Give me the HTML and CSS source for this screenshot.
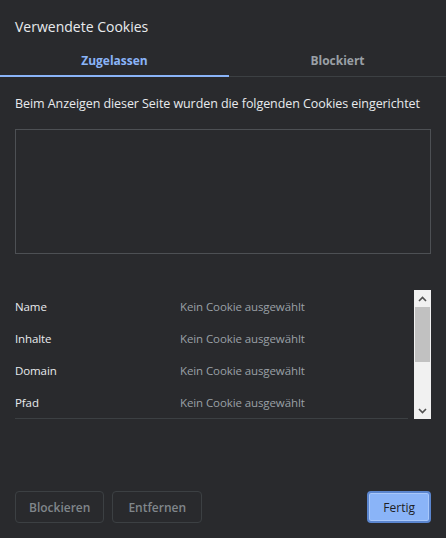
FILE: index.html
```html
<!DOCTYPE html>
<html lang="de">
<head>
<meta charset="utf-8">
<title>Verwendete Cookies</title>
<link rel="stylesheet" href="styles.css">
</head>
<body>
<div class="dialog">
  <div class="title">Verwendete Cookies</div>
  <div class="tabs">
    <div class="tab active">Zugelassen</div>
    <div class="tab">Blockiert</div>
  </div>
  <div class="desc">Beim Anzeigen dieser Seite wurden die folgenden Cookies eingerichtet</div>
  <div class="tree"></div>
  <div class="details">
    <div class="rows">
      <div class="row"><span class="label">Name</span><span class="value">Kein Cookie ausgewählt</span></div>
      <div class="row"><span class="label">Inhalte</span><span class="value">Kein Cookie ausgewählt</span></div>
      <div class="row"><span class="label">Domain</span><span class="value">Kein Cookie ausgewählt</span></div>
      <div class="row"><span class="label">Pfad</span><span class="value">Kein Cookie ausgewählt</span></div>
    </div>
    <div class="scrollbar">
      <div class="arrow">
        <svg width="9" height="6" viewBox="0 0 9 6"><path d="M1 5 L4.5 1.5 L8 5" fill="none" stroke="#505050" stroke-width="1.6"/></svg>
      </div>
      <div class="track"><div class="thumb"></div></div>
      <div class="arrow">
        <svg width="9" height="6" viewBox="0 0 9 6"><path d="M1 1 L4.5 4.5 L8 1" fill="none" stroke="#505050" stroke-width="1.6"/></svg>
      </div>
    </div>
  </div>
  <div class="footer">
    <button class="btn">Blockieren</button>
    <button class="btn wide">Entfernen</button>
    <button class="btn primary">Fertig</button>
  </div>
</div>
</body>
</html>
```
FILE: styles.css
```css
html, body {
  margin: 0;
  padding: 0;
  background: #292a2d;
}
body {
  font-family: "Open Sans", "Noto Sans", "Liberation Sans", sans-serif;
  color: #e8eaed;
}
.dialog {
  width: 446px;
  height: 538px;
  display: flex;
  flex-direction: column;
  box-sizing: border-box;
}
.title {
  font-size: 14px;
  line-height: 20px;
  padding: 17px 15px 0;
  height: 27px;
}
.tabs {
  display: grid;
  grid-template-columns: 229px 1fr;
  border-bottom: 1px solid #3c4043;
}
.tab {
  height: 33px;
  padding-top: 1px;
  box-sizing: border-box;
  display: flex;
  align-items: center;
  justify-content: center;
  font-size: 12px;
  font-weight: 700;
  color: #9aa0a6;
  border-bottom: 2px solid transparent;
  margin-bottom: -1px;
}
.tab.active {
  color: #8ab4f8;
  border-bottom-color: #8ab4f8;
}
.desc {
  font-size: 12.5px;
  line-height: 17px;
  padding: 18px 15px 0;
  height: 34px;
  letter-spacing: -0.07px;
}
.tree {
  margin: 0 15px;
  height: 123px;
  border: 1px solid #4d5054;
}
.details {
  display: flex;
  margin: 36px 15px 0;
  height: 129px;
}
.rows {
  width: 393px;
  height: 128px;
  border-bottom: 1px solid #3c4043;
}
.row {
  display: flex;
  align-items: center;
  height: 32px;
  font-size: 11.5px;
  letter-spacing: -0.1px;
}
.label {
  width: 165px;
  color: #e8eaed;
}
.value {
  color: #9aa0a6;
}
.scrollbar {
  width: 17px;
  margin-left: 6px;
  background: #f1f1f1;
  display: flex;
  flex-direction: column;
}
.arrow {
  height: 17px;
  display: flex;
  align-items: center;
  justify-content: center;
}
.track {
  flex: 1;
  padding: 0 1px;
}
.thumb {
  height: 55px;
  background: #c1c1c1;
}
.footer {
  margin-top: auto;
  display: flex;
  gap: 8px;
  padding: 0 15px 15px;
}
.btn {
  font-family: inherit;
  height: 32px;
  padding: 0 13px;
  font-size: 12px;
  font-weight: 600;
  color: #80868b;
  background: transparent;
  border: 1px solid #3c4043;
  border-radius: 4px;
}
.btn.wide {
  padding: 0 15px;
}
.btn.primary {
  margin-left: auto;
  color: #202124;
  background: #8ab4f8;
  border: 2px solid #5b86cf;
  font-weight: 400;
  padding: 0 14px;
  box-shadow: inset 0 0 0 1px #a8c7fa;
}
```
